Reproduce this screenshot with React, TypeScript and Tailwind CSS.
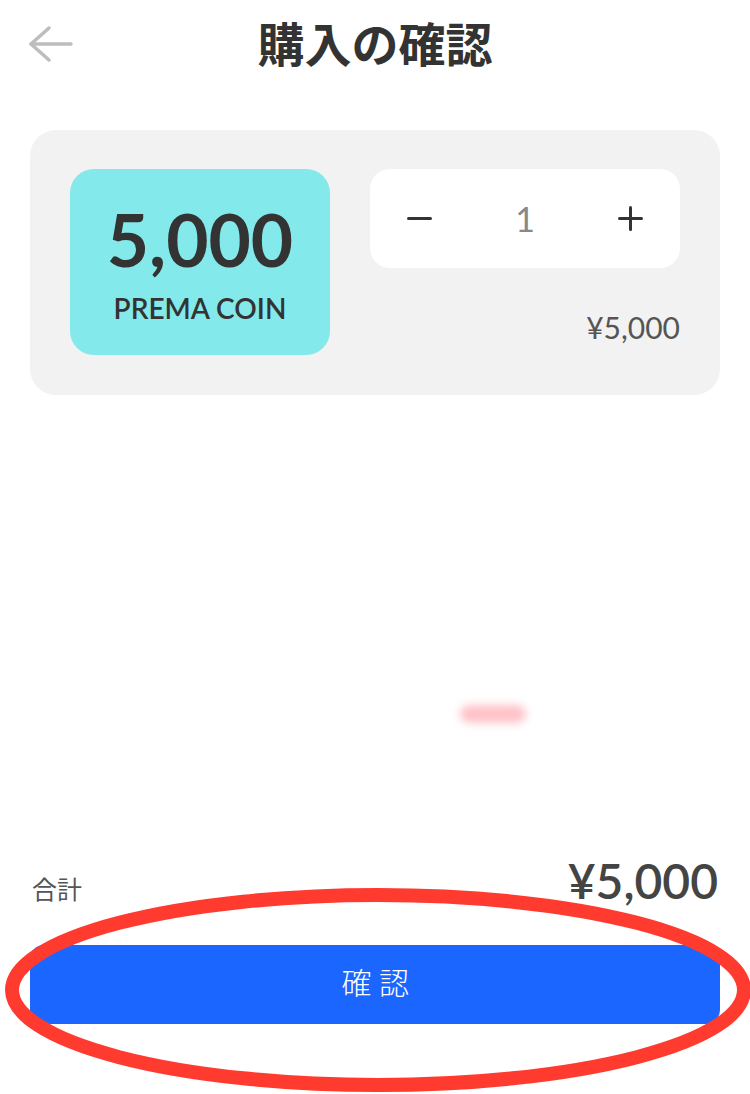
const latin = '[font-family:Lato,"Noto_Sans_CJK_JP",sans-serif]';

const BackArrow = () => (
  <svg width="46" height="38" viewBox="0 0 46 38" fill="none" stroke="#bdbdbd" strokeWidth="3.5" strokeLinecap="round" strokeLinejoin="round">
    <path d="M21 3 L3 19 L21 35" />
    <path d="M3 19 H43" />
  </svg>
);

export default function App() {
  return (
    <div className="relative flex h-[1094px] w-[750px] flex-col overflow-hidden bg-white [font-family:'Noto_Sans_CJK_JP',sans-serif]">
      {/* header */}
      <div className="grid h-[82px] grid-cols-[1fr_auto_1fr] items-center">
        <div className="pl-[28px] pt-[6px]">
          <BackArrow />
        </div>
        <h1 className="text-[47px] font-bold leading-none text-[#333]">購入の確認</h1>
        <div />
      </div>

      {/* product card */}
      <div className="mx-[30px] mt-[48px] flex gap-[40px] rounded-[26px] bg-[#f2f2f2] px-[40px] pb-[40px] pt-[39px]">
        <div className={`flex h-[186px] w-[260px] flex-col items-center justify-center rounded-[24px] bg-[#84e9ea] text-[#333] ${latin}`}>
          <div className="text-[73px] font-bold leading-none">5,000</div>
          <div className="mt-[18px] text-[28px] font-semibold leading-none">PREMA COIN</div>
        </div>
        <div className="flex flex-1 flex-col">
          <div className="flex h-[99px] items-center justify-between rounded-[20px] bg-white px-[37px]">
            <span className="h-[3px] w-[25px] rounded-full bg-[#333]" />
            <span className={`text-[34px] font-normal leading-none text-[#888] ${latin}`}>1</span>
            <span className="relative h-[25px] w-[25px]">
              <span className="absolute left-0 top-[11px] h-[3px] w-[25px] rounded-full bg-[#333]" />
              <span className="absolute left-[11px] top-0 h-[25px] w-[3px] rounded-full bg-[#333]" />
            </span>
          </div>
          <div className={`mt-[44px] text-right text-[30px] leading-none text-[#555] ${latin}`}>¥5,000</div>
        </div>
      </div>

      {/* blurred smudge */}
      <div className="flex-1">
        <div className="ml-[460px] mt-[310px] h-[18px] w-[66px] rounded-full bg-[#ffb3ba] opacity-80 blur-[4px]" />
      </div>

      {/* total */}
      <div className="flex items-end justify-between px-[32px]">
        <span className="pb-[4px] text-[25px] leading-none text-[#555]">合計</span>
        <span className={`text-[48px] font-semibold leading-none text-[#444] ${latin}`}>¥5,000</span>
      </div>

      {/* confirm button */}
      <div className="mb-[70px] mt-[40px] px-[30px]">
        <button className="flex h-[79px] w-full items-center justify-center rounded-[14px] bg-[#1a66ff] pb-[6px] pl-[8px] text-[30px] font-light tracking-[0.25em] text-white">
          確認
        </button>
      </div>

      {/* annotation ellipse */}
      <svg className="pointer-events-none absolute left-0 top-0" width="750" height="1094" viewBox="0 0 750 1094">
        <ellipse cx="378" cy="990" rx="366" ry="95" fill="none" stroke="#ff3b30" strokeWidth="14" />
      </svg>
    </div>
  );
}
